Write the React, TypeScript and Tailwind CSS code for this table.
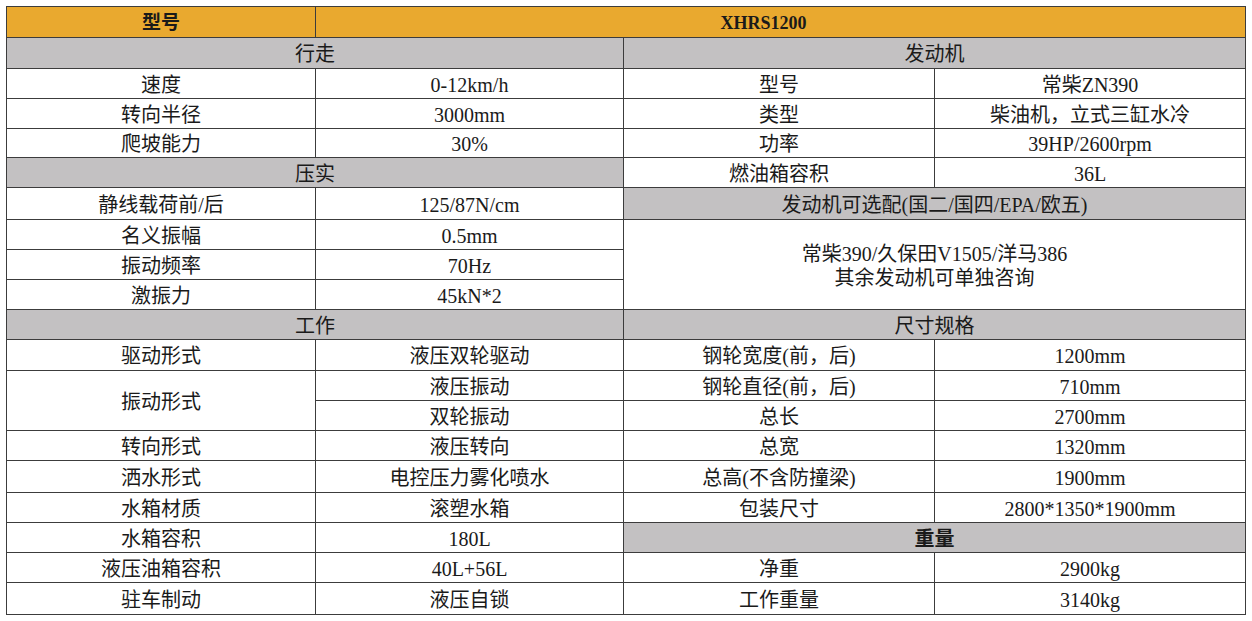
import type { ReactNode } from "react";

const font = { fontFamily: '"Liberation Serif", "Noto Sans CJK SC", serif' };

function Td({
  children,
  colSpan,
  rowSpan,
  className = "",
}: {
  children?: ReactNode;
  colSpan?: number;
  rowSpan?: number;
  className?: string;
}) {
  return (
    <td
      colSpan={colSpan}
      rowSpan={rowSpan}
      className={`border border-[#3c3c3c] text-center align-middle p-0 pt-[2px] leading-[24px] ${className}`}
    >
      {children}
    </td>
  );
}

function Section({ children, bold }: { children: ReactNode; bold?: boolean }) {
  return (
    <Td colSpan={2} className={`bg-[#c3c1c2] ${bold ? "font-bold" : ""}`}>
      {children}
    </Td>
  );
}

export default function App() {
  return (
    <div className="w-[1252px] h-[621px] bg-white pt-[6px] pl-[6px]" style={font}>
      <table className="table-fixed border-collapse w-[1239px] text-[20px] text-[#1a1a1a]">
        <colgroup>
          <col className="w-[309px]" />
          <col className="w-[308px]" />
          <col className="w-[311px]" />
          <col className="w-[311px]" />
        </colgroup>
        <tbody>
          <tr className="h-[31px]">
            <Td className="bg-[#e9a92f] font-bold text-[19px]">型号</Td>
            <Td colSpan={3} className="bg-[#e9a92f] font-bold text-[18px] pr-[34px]">
              XHRS1200
            </Td>
          </tr>
          <tr className="h-[31px]">
            <Section>行走</Section>
            <Section>发动机</Section>
          </tr>
          <tr className="h-[30px]">
            <Td>速度</Td>
            <Td>0-12km/h</Td>
            <Td>型号</Td>
            <Td>常柴ZN390</Td>
          </tr>
          <tr className="h-[30px]">
            <Td>转向半径</Td>
            <Td>3000mm</Td>
            <Td>类型</Td>
            <Td>柴油机，立式三缸水冷</Td>
          </tr>
          <tr className="h-[29px]">
            <Td>爬坡能力</Td>
            <Td>30%</Td>
            <Td>功率</Td>
            <Td>39HP/2600rpm</Td>
          </tr>
          <tr className="h-[30px]">
            <Section>压实</Section>
            <Td>燃油箱容积</Td>
            <Td>36L</Td>
          </tr>
          <tr className="h-[32px]">
            <Td>静线载荷前/后</Td>
            <Td>125/87N/cm</Td>
            <Section>发动机可选配(国二/国四/EPA/欧五)</Section>
          </tr>
          <tr className="h-[30px]">
            <Td>名义振幅</Td>
            <Td>0.5mm</Td>
            <Td colSpan={2} rowSpan={3}>
              常柴390/久保田V1505/洋马386
              <br />
              其余发动机可单独咨询
            </Td>
          </tr>
          <tr className="h-[30px]">
            <Td>振动频率</Td>
            <Td>70Hz</Td>
          </tr>
          <tr className="h-[30px]">
            <Td>激振力</Td>
            <Td>45kN*2</Td>
          </tr>
          <tr className="h-[30px]">
            <Section>工作</Section>
            <Section>尺寸规格</Section>
          </tr>
          <tr className="h-[31px]">
            <Td>驱动形式</Td>
            <Td>液压双轮驱动</Td>
            <Td>钢轮宽度(前，后)</Td>
            <Td>1200mm</Td>
          </tr>
          <tr className="h-[30px]">
            <Td rowSpan={2}>振动形式</Td>
            <Td>液压振动</Td>
            <Td>钢轮直径(前，后)</Td>
            <Td>710mm</Td>
          </tr>
          <tr className="h-[30px]">
            <Td>双轮振动</Td>
            <Td>总长</Td>
            <Td>2700mm</Td>
          </tr>
          <tr className="h-[30px]">
            <Td>转向形式</Td>
            <Td>液压转向</Td>
            <Td>总宽</Td>
            <Td>1320mm</Td>
          </tr>
          <tr className="h-[32px]">
            <Td>洒水形式</Td>
            <Td>电控压力雾化喷水</Td>
            <Td>总高(不含防撞梁)</Td>
            <Td>1900mm</Td>
          </tr>
          <tr className="h-[30px]">
            <Td>水箱材质</Td>
            <Td>滚塑水箱</Td>
            <Td>包装尺寸</Td>
            <Td>2800*1350*1900mm</Td>
          </tr>
          <tr className="h-[30px]">
            <Td>水箱容积</Td>
            <Td>180L</Td>
            <Section bold>重量</Section>
          </tr>
          <tr className="h-[30px]">
            <Td>液压油箱容积</Td>
            <Td>40L+56L</Td>
            <Td>净重</Td>
            <Td>2900kg</Td>
          </tr>
          <tr className="h-[32px]">
            <Td>驻车制动</Td>
            <Td>液压自锁</Td>
            <Td>工作重量</Td>
            <Td>3140kg</Td>
          </tr>
        </tbody>
      </table>
    </div>
  );
}
